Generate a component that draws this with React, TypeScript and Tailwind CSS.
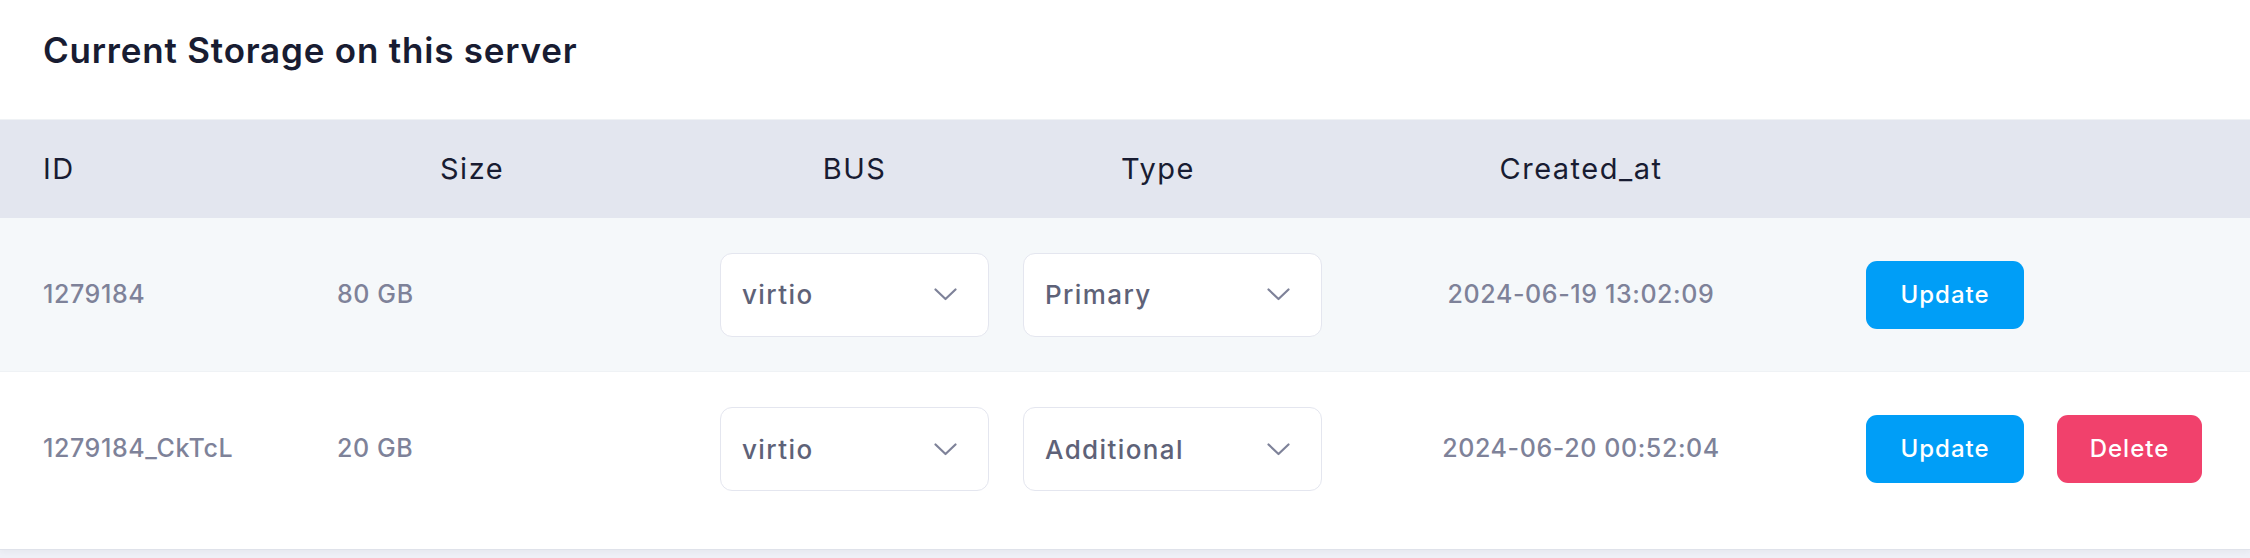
type Disk = {
    id: string;
    size: string;
    bus: string;
    type: string;
    created: string;
    canDelete: boolean;
};

const disks: Disk[] = [
    { id: "1279184", size: "80 GB", bus: "virtio", type: "Primary", created: "2024-06-19 13:02:09", canDelete: false },
    { id: "1279184_CkTcL", size: "20 GB", bus: "virtio", type: "Additional", created: "2024-06-20 00:52:04", canDelete: true },
];

function Chevron() {
    return (
        <svg width="23" height="13" viewBox="0 0 23 13" fill="none" className="text-[#7e8299]">
            <path d="M1.5 1.5 L11.5 11 L21.5 1.5" stroke="currentColor" strokeWidth="2.2" strokeLinecap="round" strokeLinejoin="round" />
        </svg>
    );
}

function FakeSelect({ value, width }: { value: string; width: string }) {
    return (
        <div className={`${width} h-[84px] flex items-center justify-between pl-[21px] pr-[31px] bg-white border-[1.5px] border-[#e4e6ef] rounded-[12px]`}>
            <span className="text-[26px] font-medium text-[#5e6278] tracking-[1.4px]">{value}</span>
            <Chevron />
        </div>
    );
}

export default function App() {
    return (
        <div className="w-full min-h-[558px] bg-[#eef0f7] font-['Inter',sans-serif]">
            <div className="bg-white border-b border-[#dfe2ea] shadow-[0_2px_6px_rgba(0,0,0,0.04)]">
                <div className="h-[119px] pl-[43px] pt-[33px]">
                    <h2 className="text-[35px] leading-none font-semibold text-[#181c32] tracking-[0.8px]">Current Storage on this server</h2>
                </div>

                <div className="border-t border-[#eff2f5]">
                    {/* header */}
                    <div className="h-[98px] bg-[#e3e6ef] flex items-center pl-[43px] text-[29px] text-[#181c32] tracking-[1.5px]">
                        <div className="w-[294px]">ID</div>
                        <div className="w-[383px] pl-[103px]">Size</div>
                        <div className="w-[303px]">
                            <div className="w-[269px] text-center">BUS</div>
                        </div>
                        <div className="w-[299px] pl-[98px]">Type</div>
                        <div className="w-[518px] text-center">Created_at</div>
                        <div className="flex-1" />
                    </div>

                    {disks.map((d, i) => (
                        <div
                            key={d.id}
                            className={`h-[154px] flex items-center pl-[43px] text-[25px] font-medium text-[#7e8299] tracking-[0.6px] ${i === 0 ? "bg-[#f5f8fa] border-b border-[#eff2f5]" : "bg-white"}`}
                        >
                            <div className="w-[294px]">{d.id}</div>
                            <div className="w-[383px]">{d.size}</div>
                            <div className="w-[303px]">
                                <FakeSelect value={d.bus} width="w-[269px]" />
                            </div>
                            <div className="w-[299px]">
                                <FakeSelect value={d.type} width="w-[299px]" />
                            </div>
                            <div className="w-[518px] text-center">{d.created}</div>
                            <div className="flex items-center gap-[33px] pl-[26px] tracking-[1px]">
                                <button className="w-[158px] h-[68px] rounded-[11px] bg-[#009ef7] text-white text-[24px] font-medium">
                                    Update
                                </button>
                                {d.canDelete ? (
                                    <button className="w-[145px] h-[68px] rounded-[11px] bg-[#f1416c] text-white text-[24px] font-medium">
                                        Delete
                                    </button>
                                ) : null}
                            </div>
                        </div>
                    ))}
                    <div className="h-[23px]" />
                </div>
            </div>
        </div>
    );
}
